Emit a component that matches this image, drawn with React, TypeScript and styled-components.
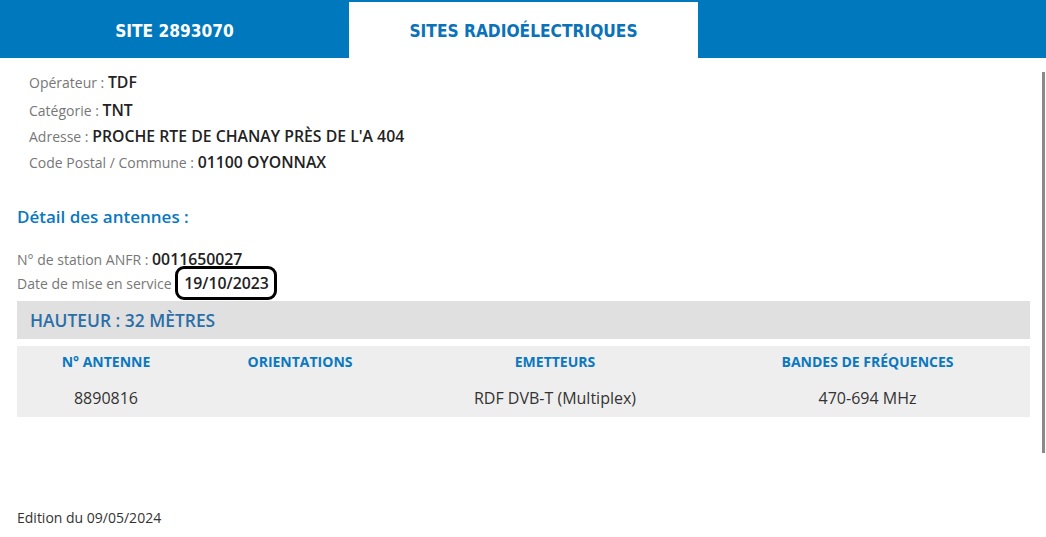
import React from "react";
import styled, { createGlobalStyle } from "styled-components";

const GlobalStyle = createGlobalStyle`
  html, body {
    margin: 0;
    padding: 0;
    background: #fff;
    font-family: "Open Sans", "Liberation Sans", Arial, sans-serif;
  }
`;

const Page = styled.div`
  position: relative;
  width: 1046px;
  height: 537px;
  overflow: hidden;
  display: flex;
  flex-direction: column;
`;

const TabBar = styled.div`
  display: flex;
  height: 58px;
  background: #0078be;
  padding-top: 2px;
  box-sizing: border-box;
`;

const Tab = styled.div<{ $active?: boolean }>`
  width: 349px;
  display: flex;
  align-items: center;
  justify-content: center;
  padding-top: 2px;
  font-family: "DejaVu Sans Condensed", "DejaVu Sans", sans-serif;
  font-weight: bold;
  font-size: 17.2px;
  color: ${(p) => (p.$active ? "#0a72b8" : "#fff")};
  background: ${(p) => (p.$active ? "#fff" : "transparent")};
`;

const Content = styled.div`
  flex: 1;
  display: flex;
  flex-direction: column;
  padding: 10px 16px 0 17px;
`;

const InfoBlock = styled.div`
  padding-left: 12px;
  display: flex;
  flex-direction: column;
`;

const Line = styled.div<{ $h?: number }>`
  height: ${(p) => p.$h ?? 26}px;
  line-height: ${(p) => p.$h ?? 26}px;
  font-size: 14px;
  color: #777;
  white-space: nowrap;
`;

const Value = styled.span<{ $boxed?: boolean }>`
  font-size: 15.8px;
  font-weight: 600;
  color: #222;
  ${(p) =>
    p.$boxed &&
    `
    border: 3px solid #000;
    border-radius: 9px;
    padding: 3px 5px 3px 6px;
  `}
`;

const SectionTitle = styled.h2`
  margin: 30px 0 18px 0;
  font-size: 17px;
  font-weight: 600;
  color: #0a78c0;
  line-height: 24px;
`;

const StationBlock = styled.div`
  display: flex;
  flex-direction: column;
`;

const StationLine = styled.div`
  height: 24px;
  line-height: 24px;
  font-size: 14px;
  color: #777;
  white-space: nowrap;
`;

const HeightBar = styled.div`
  margin-top: 6px;
  height: 38px;
  background: #e0e0e0;
  display: flex;
  align-items: center;
  padding-left: 13px;
  font-size: 17.4px;
  font-weight: 600;
  color: #2b6ea8;
`;

const Table = styled.div`
  margin-top: 7px;
  background: #eeeeee;
  display: grid;
  grid-template-columns: 178px 210px 300px 1fr;
  grid-template-rows: 31px 40px;
`;

const HeadCell = styled.div`
  display: flex;
  align-items: center;
  justify-content: center;
  font-size: 14px;
  font-weight: 700;
  color: #0a78c0;
  line-height: 18px;
`;

const Cell = styled.div`
  display: flex;
  align-items: center;
  justify-content: center;
  font-size: 16px;
  color: #333;
  padding-top: 1px;
`;

const Footer = styled.div`
  margin-top: auto;
  margin-bottom: 10px;
  font-size: 14px;
  color: #333;
`;

const ScrollThumb = styled.div`
  position: absolute;
  top: 72px;
  left: 1042px;
  width: 3px;
  height: 381px;
  background: #8a8a8a;
`;

export default function App() {
  return (
    <>
      <GlobalStyle />
      <Page>
        <TabBar>
          <Tab>SITE 2893070</Tab>
          <Tab $active>SITES RADIOÉLECTRIQUES</Tab>
        </TabBar>
        <Content>
          <InfoBlock>
            <Line $h={29}>
              Opérateur : <Value>TDF</Value>
            </Line>
            <Line>
              Catégorie : <Value>TNT</Value>
            </Line>
            <Line>
              Adresse : <Value>PROCHE RTE DE CHANAY PRÈS DE L'A 404</Value>
            </Line>
            <Line>
              Code Postal / Commune : <Value>01100 OYONNAX</Value>
            </Line>
          </InfoBlock>
          <SectionTitle>Détail des antennes :</SectionTitle>
          <StationBlock>
            <StationLine>
              N° de station ANFR : <Value>0011650027</Value>
            </StationLine>
            <StationLine>
              Date de mise en service <Value $boxed>19/10/2023</Value>
            </StationLine>
          </StationBlock>
          <HeightBar>HAUTEUR : 32 MÈTRES</HeightBar>
          <Table>
            <HeadCell>N° ANTENNE</HeadCell>
            <HeadCell>ORIENTATIONS</HeadCell>
            <HeadCell>EMETTEURS</HeadCell>
            <HeadCell>BANDES DE FRÉQUENCES</HeadCell>
            <Cell>8890816</Cell>
            <Cell></Cell>
            <Cell>RDF DVB-T (Multiplex)</Cell>
            <Cell>470-694 MHz</Cell>
          </Table>
          <Footer>Edition du 09/05/2024</Footer>
        </Content>
        <ScrollThumb />
      </Page>
    </>
  );
}
